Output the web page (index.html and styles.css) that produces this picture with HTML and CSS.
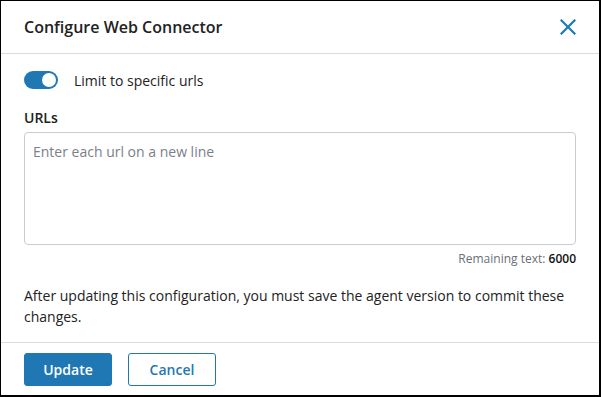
FILE: index.html
```html
<!DOCTYPE html>
<html>
<head>
<meta charset="utf-8">
<link rel="stylesheet" href="styles.css">
</head>
<body>
<div class="dialog">
  <div class="header">
    <h1 class="title">Configure Web Connector</h1>
    <button class="close" aria-label="Close">
      <svg width="16" height="16" viewBox="0 0 16 16"><path d="M1.5 1.5L14.5 14.5M14.5 1.5L1.5 14.5" stroke="#1f78b4" stroke-width="2.2" stroke-linecap="square"/></svg>
    </button>
  </div>
  <div class="body">
    <div class="toggle-row">
      <span class="toggle"><span class="knob"></span></span>
      <span class="toggle-label">Limit to specific urls</span>
    </div>
    <label class="field-label">URLs</label>
    <textarea class="urls" placeholder="Enter each url on a new line"></textarea>
    <div class="remaining">Remaining text: <b>6000</b></div>
    <p class="note">After updating this configuration, you must save the agent version to commit these changes.</p>
  </div>
  <div class="footer">
    <button class="btn primary">Update</button>
    <button class="btn secondary">Cancel</button>
  </div>
</div>
</body>
</html>
```
FILE: styles.css
```css
html, body { margin: 0; padding: 0; }
body {
  font-family: "Open Sans", "Noto Sans", sans-serif;
  color: #222;
  background: #fff;
}
.dialog {
  width: 601px;
  height: 397px;
  box-sizing: border-box;
  border: 1px solid #000;
  border-right-width: 2px;
  border-bottom-width: 2px;
  display: flex;
  flex-direction: column;
}
.header {
  height: 52px;
  flex: none;
  border-bottom: 1px solid #d5dde3;
  display: flex;
  align-items: center;
  justify-content: space-between;
  padding: 0 23px 0 23px;
}
.title {
  margin: 0;
  font-size: 16px;
  font-weight: 600;
  color: #222;
}
.close {
  border: 0;
  background: none;
  padding: 0;
  width: 16px;
  height: 16px;
  display: flex;
  align-items: center;
  justify-content: center;
}
.body {
  padding: 15px 23px 0 23px;
  flex: 1;
}
.toggle-row {
  display: flex;
  align-items: center;
  gap: 16px;
  height: 22px;
}
.toggle {
  width: 34px;
  height: 18px;
  border-radius: 9px;
  background: #1f78b4;
  position: relative;
  box-sizing: border-box;
}
.knob {
  position: absolute;
  right: 2px;
  top: 2px;
  width: 14px;
  height: 14px;
  border-radius: 50%;
  background: #fff;
}
.toggle-label {
  font-size: 14px;
}
.field-label {
  display: block;
  margin-top: 17px;
  font-size: 14px;
  font-weight: 600;
  line-height: 20px;
}
.urls {
  display: block;
  margin-top: 4px;
  width: 100%;
  height: 113px;
  box-sizing: border-box;
  border: 1px solid #c9cdd1;
  border-radius: 4px;
  padding: 9px 8px;
  font-family: inherit;
  font-size: 14px;
  resize: none;
}
.urls::placeholder { color: #7b8088; }
.remaining {
  text-align: right;
  font-size: 12px;
  color: #6b6f73;
  margin-top: 6px;
  line-height: 16px;
}
.remaining b { color: #111; font-weight: 600; }
.note {
  margin: 18px 0 0 0;
  font-size: 14px;
  line-height: 21px;
}
.footer {
  flex: none;
  border-top: 1px solid #d5dde3;
  height: 53px;
  box-sizing: border-box;
  padding: 10px 23px 0 23px;
  display: flex;
  gap: 16px;
  align-items: flex-start;
}
.btn {
  width: 88px;
  height: 33px;
  border-radius: 3px;
  font-family: inherit;
  font-size: 14px;
  font-weight: 600;
  box-sizing: border-box;
  cursor: pointer;
}
.primary {
  background: #1f78b4;
  border: 1px solid #1f78b4;
  color: #fff;
}
.secondary {
  background: #fff;
  border: 1px solid #1f78b4;
  color: #1f78b4;
}
```
